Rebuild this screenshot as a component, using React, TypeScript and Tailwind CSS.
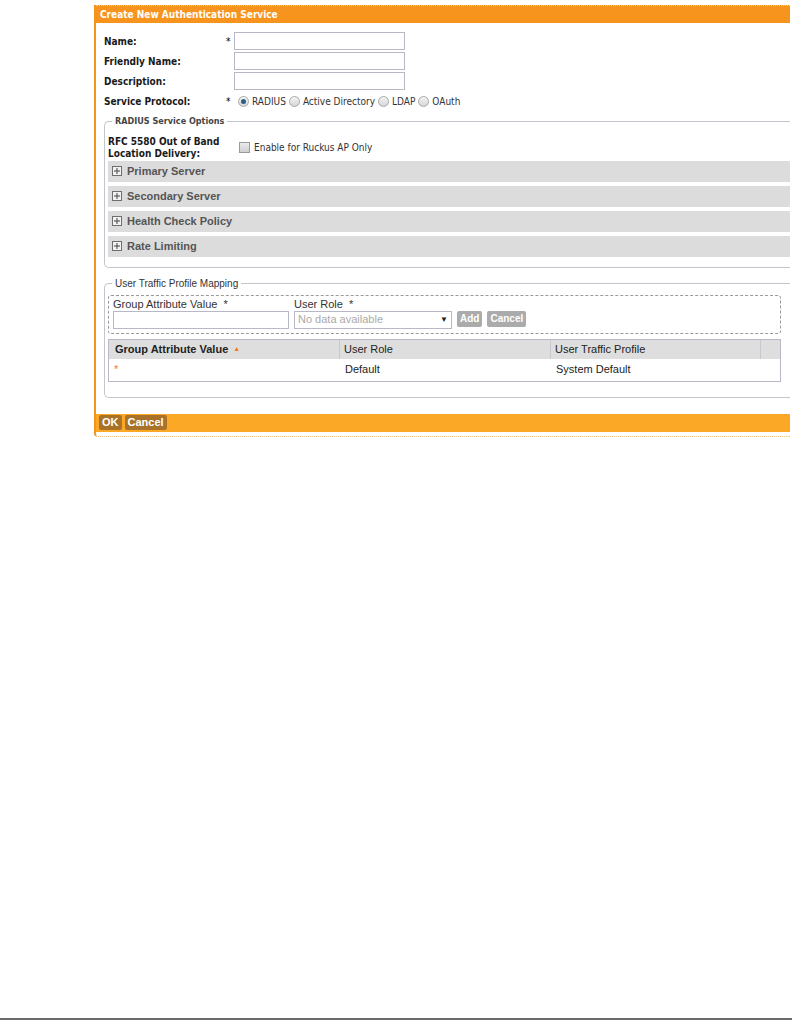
import React from "react";

const cond = "font-['DejaVu_Sans_Condensed','DejaVu_Sans',sans-serif]";
const arial = "font-['Liberation_Sans',Arial,sans-serif]";

function Radio({ checked, label }: { checked?: boolean; label: string }) {
  return (
    <label className="flex items-center gap-[3px] mr-[3px]">
      <span className="w-[11px] h-[11px] rounded-full border border-[#a9a9a9] bg-gradient-to-b from-[#f4f4f4] to-[#d6d6d6] flex items-center justify-center">
        {checked && <span className="w-[5px] h-[5px] rounded-full bg-[#2a5f86]" />}
      </span>
      <span>{label}</span>
    </label>
  );
}

function PlusBox() {
  return (
    <span className="w-[10px] h-[10px] border border-[#6e6e6e] bg-[#f2f2f2] flex items-center justify-center">
      <svg width="8" height="8" viewBox="0 0 8 8">
        <path d="M4 1v6M1 4h6" stroke="#444" strokeWidth="1" />
      </svg>
    </span>
  );
}

function Section({ title }: { title: string }) {
  return (
    <div className="h-[21px] bg-[#dcdcdc] flex items-center pl-[4px] gap-[5px]">
      <PlusBox />
      <span className={`${arial} text-[11px] font-bold text-[#555]`}>{title}</span>
    </div>
  );
}

function FormRow({ label, req }: { label: string; req?: boolean }) {
  return (
    <div className="flex items-center h-[20px]">
      <div className="w-[122px] font-bold text-[10px] text-[#1a1a1a]">{label}</div>
      <div className="w-[8px] text-[10px]">{req ? "*" : ""}</div>
      <div className="w-[171px] h-[18px] border border-[#b8b8c6] bg-white" />
    </div>
  );
}

export default function App() {
  return (
    <div className={`w-[792px] h-[1020px] bg-white flex flex-col ${cond}`}>
      <div className="pt-[5px] pl-[94px]">
        <div className="w-[696px] border-l-2 border-b border-solid border-l-[#f7941e] border-b-[#f4c37e] [border-bottom-style:dotted] rounded-bl-[4px] pb-[4px]">
          <div className="h-[18px] bg-[#f7941e] border-t border-dotted border-[#fbd3a0] flex items-center pl-[4px]">
            <span className="text-white font-bold text-[10px]">Create New Authentication Service</span>
          </div>

          <div className="pl-[8px] pt-[8px]">
            <FormRow label="Name:" req />
            <FormRow label="Friendly Name:" />
            <FormRow label="Description:" />
            <div className="flex items-center h-[20px] text-[10px]">
              <div className="w-[122px] font-bold text-[#1a1a1a]">Service Protocol:</div>
              <div className="w-[12px]">*</div>
              <div className="flex items-center text-[#333]">
                <Radio checked label="RADIUS" />
                <Radio label="Active Directory" />
                <Radio label="LDAP" />
                <Radio label="OAuth" />
              </div>
            </div>

            <fieldset className="mt-[4px] border border-r-0 border-[#c4c4cc] rounded-l-[5px] pl-[3px] pb-[10px]">
              <legend className="ml-[4px] px-[3px] text-[9px] font-bold text-[#444]">RADIUS Service Options</legend>
              <div className="flex items-center mt-[7px] mb-[1px]">
                <div className="w-[131px] font-bold text-[10px] leading-[12px] text-[#1a1a1a]">
                  RFC 5580 Out of Band
                  <br />
                  Location Delivery:
                </div>
                <span className="w-[11px] h-[11px] border border-[#9a9a9a] bg-gradient-to-b from-[#ececec] to-[#d0d0d0] mr-[4px]" />
                <span className="text-[10px] text-[#333]">Enable for Ruckus AP Only</span>
              </div>
              <div className="flex flex-col gap-[4px]">
                <Section title="Primary Server" />
                <Section title="Secondary Server" />
                <Section title="Health Check Policy" />
                <Section title="Rate Limiting" />
              </div>
            </fieldset>

            <fieldset className={`mt-[8px] border border-r-0 border-[#c4c4cc] rounded-l-[5px] pl-[3px] pb-[15px] ${arial}`}>
              <legend className="ml-[4px] px-[3px] text-[10px] text-[#333]">User Traffic Profile Mapping</legend>
              <div className="w-[673px] mt-[4px] border border-dashed border-[#9a9a9a] rounded-[3px] pl-[4px] pt-[2px] pb-[4px] flex gap-[5px] items-end text-[11px] leading-[13px] text-[#333]">
                <div className="flex flex-col">
                  <span>Group Attribute Value &nbsp;*</span>
                  <div className="w-[176px] h-[18px] border border-[#b8b8c6]" />
                </div>
                <div className="flex flex-col">
                  <span>User Role &nbsp;*</span>
                  <div className="w-[158px] h-[18px] border border-[#b8b8c6] flex items-center justify-between px-[3px] text-[#aaa]">
                    <span>No data available</span>
                    <span className="text-[8px] text-[#222]">▼</span>
                  </div>
                </div>
                <div className="flex gap-[5px] mb-[2px]">
                  <span className="h-[16px] px-[3px] rounded-[2px] bg-[#ababab] text-white font-bold text-[10px] flex items-center">Add</span>
                  <span className="h-[16px] px-[3px] rounded-[2px] bg-[#ababab] text-white font-bold text-[10px] flex items-center">Cancel</span>
                </div>
              </div>

              <div className="w-[673px] mt-[5px] border border-[#b8b8c8] text-[11px] text-[#222]">
                <div className="flex h-[19px] bg-[#dedede]">
                  <div className="w-[231px] border-r border-[#c8c8d0] pl-[6px] flex items-center font-bold gap-[5px]">
                    Group Attribute Value <span className="text-[#f07a1d] text-[7px]">▲</span>
                  </div>
                  <div className="w-[211px] border-r border-[#c8c8d0] pl-[4px] flex items-center">User Role</div>
                  <div className="w-[210px] border-r border-[#c8c8d0] pl-[4px] flex items-center">User Traffic Profile</div>
                  <div className="flex-1" />
                </div>
                <div className="flex h-[22px] items-center">
                  <div className="w-[231px] pl-[5px] text-[#f07a1d]">*</div>
                  <div className="w-[211px] pl-[5px]">Default</div>
                  <div className="w-[210px] pl-[5px]">System Default</div>
                </div>
              </div>
            </fieldset>
          </div>

          <div className={`mt-[16px] h-[18px] bg-[#fba827] flex items-center pl-[3px] gap-[3px] ${arial}`}>
            <span className="h-[15px] px-[3px] rounded-[2px] bg-[#a87328] text-white font-bold text-[11px] flex items-center">OK</span>
            <span className="h-[15px] px-[3px] rounded-[2px] bg-[#a87328] text-white font-bold text-[11px] flex items-center">Cancel</span>
          </div>
        </div>
      </div>
      <div className="mt-auto h-[2px] bg-[#6b6b6b]" />
    </div>
  );
}
